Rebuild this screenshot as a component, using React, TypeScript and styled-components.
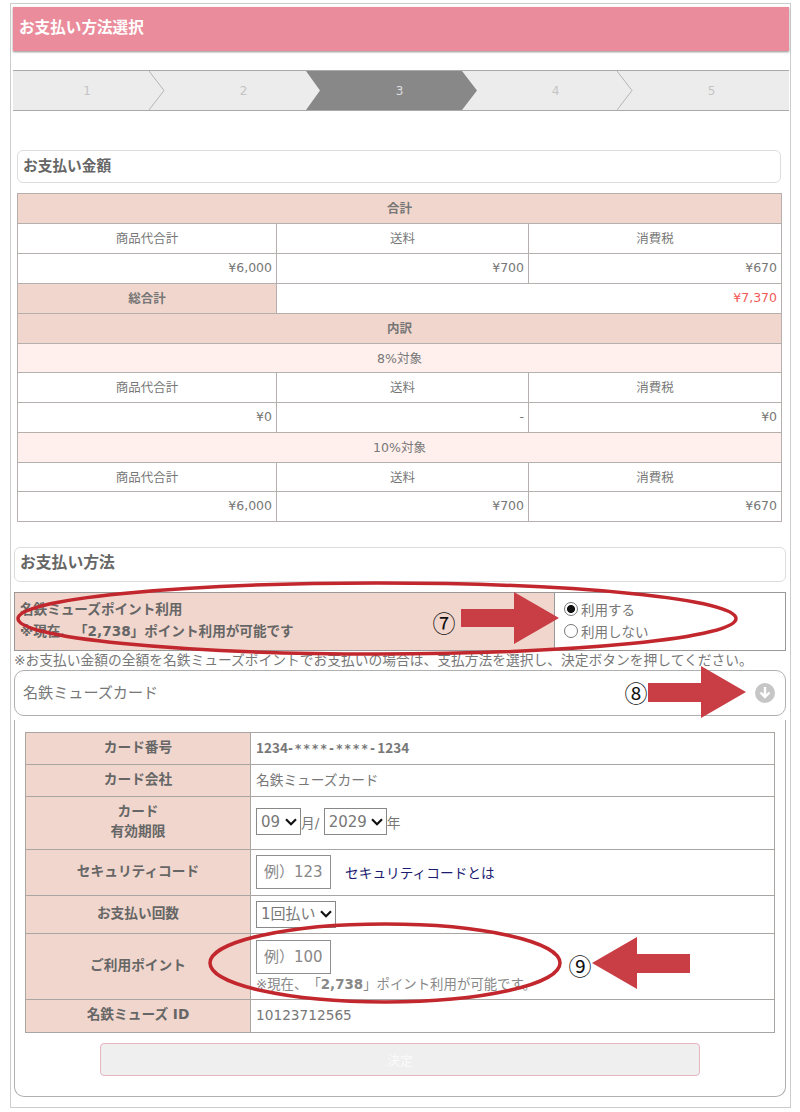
import React from "react";
import styled, { createGlobalStyle } from "styled-components";

const chevronSvg =
  "data:image/svg+xml;utf8," +
  encodeURIComponent(
    '<svg xmlns="http://www.w3.org/2000/svg" width="12" height="8" viewBox="0 0 12 8"><path d="M1 1.2 6 6.2 11 1.2" fill="none" stroke="#111" stroke-width="2.2"/></svg>'
  );

const Global = createGlobalStyle`
  html, body { margin: 0; padding: 0; background: #fff; }
  body { font-family: "DejaVu Sans", "Noto Sans CJK JP", sans-serif; color: #777; text-spacing-trim: space-all; }
  * { box-sizing: border-box; }
`;

const Page = styled.div`
  position: relative;
  width: 800px;
  height: 1112px;
  padding: 3px 0 0 10px;
  overflow: hidden;
`;
const Frame = styled.div`
  width: 781px;
  height: 1105px;
  border: 1px solid #ccc;
`;
const TitleBar = styled.h1`
  margin: 3px 0 0 2px;
  width: 776px;
  height: 44px;
  padding: 0 6px 7px;
  display: flex;
  align-items: center;
  background: #ea8c9b;
  box-shadow: 0 1px 2px rgba(0, 0, 0, 0.45);
  color: #fff;
  font-size: 15.6px;
  font-weight: 700;
`;
const Steps = styled.ol`
  list-style: none;
  margin: 19px 0 0 2px;
  padding: 0;
  width: 776px;
  height: 41px;
  display: flex;
  overflow: hidden;
  background: #ececec;
  border-top: 1px solid #aaa;
  border-bottom: 1px solid #aaa;
`;
const Step = styled.li<{ $active?: boolean; $first?: boolean }>`
  position: relative;
  flex: 0 0 ${(p) => (p.$first ? 152 : 171)}px;
  margin-right: -15px;
  padding: ${(p) => (p.$first ? "0 4px 0 0" : "0 0 0 16px")};
  display: flex;
  align-items: center;
  justify-content: center;
  font-size: 12px;
  color: ${(p) => (p.$active ? "#ddd" : "#c4c4c4")};
  background: ${(p) => (p.$active ? "#888" : "transparent")};
  clip-path: ${(p) =>
    p.$active
      ? "polygon(0 0, 156px 0, 171px 50%, 156px 100%, 0 100%, 14px 50%)"
      : "none"};
`;
const Chevron = styled.svg`
  position: absolute;
  right: 0;
  top: 0;
  width: 16px;
  height: 39px;
`;
const SectionHead = styled.h2<{ $wide?: boolean }>`
  margin: ${(p) => (p.$wide ? "25px 0 0 3px" : "39px 0 0 6px")};
  width: ${(p) => (p.$wide ? 772 : 764)}px;
  height: ${(p) => (p.$wide ? 35 : 33)}px;
  padding: 0 5px ${(p) => (p.$wide ? 6 : 5)}px;
  display: flex;
  align-items: center;
  background: #fff;
  border: 1px solid #ddd;
  border-radius: 6px;
  color: #666;
  font-size: ${(p) => (p.$wide ? 15.8 : 14.7)}px;
  font-weight: 700;
`;
const Table = styled.table<{ $left: number; $top: number; $w: number; $h: number }>`
  margin: ${(p) => p.$top}px 0 0 ${(p) => p.$left}px;
  width: ${(p) => p.$w}px;
  height: ${(p) => p.$h}px;
  table-layout: fixed;
  border-collapse: collapse;
  font-size: 12.5px;
`;
const Row = styled.tr<{ $h?: number }>`
  height: ${(p) => p.$h ?? 30}px;
`;
const Cell = styled.td<{ $align?: string; $tint?: "head" | "soft"; $bold?: boolean; $red?: boolean }>`
  border: 1px solid #b5b0ad;
  padding: 0 4px 2px;
  text-align: ${(p) => p.$align ?? "center"};
  background: ${(p) => (p.$tint === "head" ? "#f1d6cd" : p.$tint === "soft" ? "#fff0ee" : "#fff")};
  font-weight: ${(p) => (p.$bold ? 700 : 400)};
  color: ${(p) => (p.$red ? "#f25a5a" : "#777")};
`;
const PointsLabel = styled.td`
  border: 1px solid #999;
  background: #f1d6cd;
  padding: 0 5px 3px;
  font-size: 13.6px;
  font-weight: 700;
  line-height: 22px;
  color: #666;
`;
const PointsChoice = styled.td`
  border: 1px solid #999;
  padding: 0 9px 3px;
  font-size: 13.5px;
  color: #777;
`;
const RadioLine = styled.label`
  display: flex;
  align-items: center;
  gap: 3px;
  height: 22px;
`;
const Radio = styled.input`
  appearance: none;
  margin: 0;
  width: 14px;
  height: 14px;
  border: 1px solid #777;
  border-radius: 50%;
  background: #fff;
  &:checked {
    background: radial-gradient(circle, #111 0, #111 3.6px, #fff 4.4px);
  }
`;
const Note = styled.p`
  margin: 0 0 0 3px;
  height: 18px;
  white-space: nowrap;
  font-size: 13.75px;
  line-height: 18px;
  color: #777;
`;
const Accordion = styled.div`
  margin: 1px 0 0 3px;
  width: 772px;
  height: 46px;
  padding: 0 10px 0 8px;
  display: flex;
  align-items: center;
  justify-content: space-between;
  border: 1px solid #b0b0b0;
  border-radius: 10px;
  font-size: 15.1px;
  color: #777;
`;
const AccordionTitle = styled.span`
  padding-bottom: 5px;
`;
const DownIcon = styled.svg`
  width: 20px;
  height: 20px;
`;
const Body = styled.div`
  margin: 4px 0 0 3px;
  width: 772px;
  height: 377px;
  padding-top: 12px;
  border: 1px solid #b0b0b0;
  border-top: none;
  border-radius: 0 0 10px 10px;
`;
const LabelCell = styled.th`
  border: 1px solid #a9a5a3;
  background: #f1d6cd;
  padding: 0 0 4px;
  font-size: 13.7px;
  font-weight: 700;
  line-height: 20px;
  color: #666;
`;
const ValueCell = styled.td<{ $lift?: boolean }>`
  border: 1px solid #a9a5a3;
  padding: 0 5px ${(p) => (p.$lift ? 3 : 1)}px;
  font-size: 13.7px;
  color: #777;
`;
const CardNumber = styled.span`
  font-family: "Noto Sans CJK JP", sans-serif;
  font-size: 13.5px;
  font-weight: 700;
`;
const CardMask = styled.span`
  font-family: "DejaVu Sans", sans-serif;
  font-size: 12px;
  letter-spacing: 2.2px;
`;
const InlineRow = styled.div`
  display: flex;
  align-items: center;
`;
const Select = styled.select<{ $w: number }>`
  appearance: none;
  width: ${(p) => p.$w}px;
  height: 27px;
  padding: 0 0 0 4px;
  border: 1px solid #888;
  border-radius: 0;
  background: #fff url("${chevronSvg}") no-repeat right 3px center;
  font: inherit;
  font-size: 15px;
  color: #777;
`;
const TextInput = styled.input`
  display: block;
  width: 75px;
  height: 34px;
  padding: 0 7px;
  border: 1px solid #8f8f8f;
  border-radius: 0;
  font: inherit;
  font-size: 15px;
  color: #777;
  &::placeholder { color: #888; opacity: 1; }
`;
const HelpLink = styled.a`
  margin-left: 14px;
  font-size: 13.7px;
  color: #1b1b70;
  text-decoration: none;
`;
const Hint = styled.div`
  margin-top: 3px;
  font-size: 13.4px;
  line-height: 16px;
  color: #888;
  white-space: nowrap;
`;
const Submit = styled.button`
  display: block;
  margin: 10px 0 0 85px;
  width: 600px;
  height: 33px;
  background: #efefef;
  border: 1px solid #e8b4c0;
  border-radius: 4px;
  font: inherit;
  font-size: 13px;
  color: #fafafa;
`;
const Overlay = styled.svg`
  position: absolute;
  left: 0;
  top: 0;
  width: 800px;
  height: 1112px;
  pointer-events: none;
`;
const Marker = styled.span<{ $x: number; $y: number }>`
  position: absolute;
  left: ${(p) => p.$x}px;
  top: ${(p) => p.$y}px;
  width: 30px;
  height: 30px;
  transform: translate(-50%, -50%);
  display: flex;
  align-items: center;
  justify-content: center;
  font-family: "Noto Sans CJK JP", sans-serif;
  font-size: 23px;
  line-height: 30px;
  color: #111;
`;

const Money = ({ a, b, c, h }: { a: string; b: string; c: string; h?: number }) => (
  <>
    <Row $h={h}>
      <Cell>商品代合計</Cell>
      <Cell>送料</Cell>
      <Cell>消費税</Cell>
    </Row>
    <Row>
      <Cell $align="right">{a}</Cell>
      <Cell $align="right">{b}</Cell>
      <Cell $align="right">{c}</Cell>
    </Row>
  </>
);

const Line = () => (
  <Chevron viewBox="0 0 16 39">
    <polyline points="0,0 15,19.5 0,39" fill="#ececec" stroke="#b5b5b5" strokeWidth="1" />
  </Chevron>
);

export default function App() {
  return (
    <Page>
      <Global />
      <Frame>
        <TitleBar>お支払い方法選択</TitleBar>
        <Steps>
          <Step $first>
            1
            <Line />
          </Step>
          <Step>2</Step>
          <Step $active>3</Step>
          <Step>
            4
            <Line />
          </Step>
          <Step>5</Step>
        </Steps>

        <SectionHead>お支払い金額</SectionHead>
        <Table $left={6} $top={10} $w={764} $h={328}>
          <colgroup>
            <col style={{ width: 259 }} />
            <col style={{ width: 252 }} />
            <col style={{ width: 253 }} />
          </colgroup>
          <tbody>
            <Row>
              <Cell colSpan={3} $tint="head" $bold>合計</Cell>
            </Row>
            <Money a="¥6,000" b="¥700" c="¥670" />
            <Row>
              <Cell $tint="head" $bold>総合計</Cell>
              <Cell colSpan={2} $align="right" $red>¥7,370</Cell>
            </Row>
            <Row>
              <Cell colSpan={3} $tint="head" $bold>内訳</Cell>
            </Row>
            <Row $h={29}>
              <Cell colSpan={3} $tint="soft">8%対象</Cell>
            </Row>
            <Money a="¥0" b="-" c="¥0" />
            <Row>
              <Cell colSpan={3} $tint="soft">10%対象</Cell>
            </Row>
            <Money a="¥6,000" b="¥700" c="¥670" h={29} />
          </tbody>
        </Table>

        <SectionHead $wide>お支払い方法</SectionHead>
        <Table $left={3} $top={10} $w={771} $h={59}>
          <colgroup>
            <col style={{ width: 540 }} />
            <col style={{ width: 231 }} />
          </colgroup>
          <tbody>
            <tr>
              <PointsLabel>
                名鉄ミューズポイント利用
                <br />
                ※現在、「2,738」ポイント利用が可能です
              </PointsLabel>
              <PointsChoice>
                <RadioLine>
                  <Radio type="radio" name="use" defaultChecked />
                  利用する
                </RadioLine>
                <RadioLine>
                  <Radio type="radio" name="use" />
                  利用しない
                </RadioLine>
              </PointsChoice>
            </tr>
          </tbody>
        </Table>
        <Note>※お支払い金額の全額を名鉄ミューズポイントでお支払いの場合は、支払方法を選択し、決定ボタンを押してください。</Note>
        <Accordion>
          <AccordionTitle>名鉄ミューズカード</AccordionTitle>
          <DownIcon viewBox="0 0 20 20">
            <circle cx="10" cy="10" r="10" fill="#c6c6c6" />
            <path d="M10 4v10M5.5 9.5 10 14l4.5-4.5" fill="none" stroke="#fff" strokeWidth="2.4" />
          </DownIcon>
        </Accordion>
        <Body>
          <Table $left={10} $top={0} $w={749} $h={300}>
            <colgroup>
              <col style={{ width: 225 }} />
              <col style={{ width: 524 }} />
            </colgroup>
            <tbody>
              <Row $h={32}>
                <LabelCell>カード番号</LabelCell>
                <ValueCell $lift>
                  <CardNumber>
                    1234<CardMask>-****-****-</CardMask>1234
                  </CardNumber>
                </ValueCell>
              </Row>
              <Row $h={32}>
                <LabelCell>カード会社</LabelCell>
                <ValueCell $lift>名鉄ミューズカード</ValueCell>
              </Row>
              <Row $h={53}>
                <LabelCell>
                  カード
                  <br />
                  有効期限
                </LabelCell>
                <ValueCell $lift>
                  <InlineRow>
                    <Select $w={45} defaultValue="09">
                      <option>09</option>
                    </Select>
                    月/&nbsp;
                    <Select $w={63} defaultValue="2029">
                      <option>2029</option>
                    </Select>
                    年
                  </InlineRow>
                </ValueCell>
              </Row>
              <Row $h={46}>
                <LabelCell>セキュリティコード</LabelCell>
                <ValueCell>
                  <InlineRow>
                    <TextInput placeholder="例）123" />
                    <HelpLink>セキュリティコードとは</HelpLink>
                  </InlineRow>
                </ValueCell>
              </Row>
              <Row $h={38}>
                <LabelCell>お支払い回数</LabelCell>
                <ValueCell>
                  <InlineRow>
                    <Select $w={80} defaultValue="1回払い">
                      <option>1回払い</option>
                    </Select>
                  </InlineRow>
                </ValueCell>
              </Row>
              <Row $h={66}>
                <LabelCell>ご利用ポイント</LabelCell>
                <ValueCell>
                  <TextInput placeholder="例）100" />
                  <Hint>
                    ※現在、「<b>2,738</b>」ポイント利用が可能です。
                  </Hint>
                </ValueCell>
              </Row>
              <Row $h={33}>
                <LabelCell>名鉄ミューズ ID</LabelCell>
                <ValueCell $lift>10123712565</ValueCell>
              </Row>
            </tbody>
          </Table>
          <Submit>決定</Submit>
        </Body>
      </Frame>

      <Overlay viewBox="0 0 800 1112">
        <ellipse cx="377" cy="618.5" rx="359" ry="35.5" fill="none" stroke="#c1272d" strokeWidth="3.5" />
        <ellipse cx="385" cy="963" rx="175" ry="39" fill="none" stroke="#c1272d" strokeWidth="3.5" />
        <polygon points="461,609 514,609 514,592 559,618 514,644 514,627 461,627" fill="#c93e45" />
        <polygon points="648,683 701,683 701,666 746,692 701,718 701,702 648,702" fill="#c93e45" />
        <polygon points="690,954 637,954 637,937 592,963 637,989 637,973 690,973" fill="#c93e45" />
      </Overlay>
      <Marker $x={444} $y={622}>⑦</Marker>
      <Marker $x={636} $y={692}>⑧</Marker>
      <Marker $x={580} $y={965}>⑨</Marker>
    </Page>
  );
}
